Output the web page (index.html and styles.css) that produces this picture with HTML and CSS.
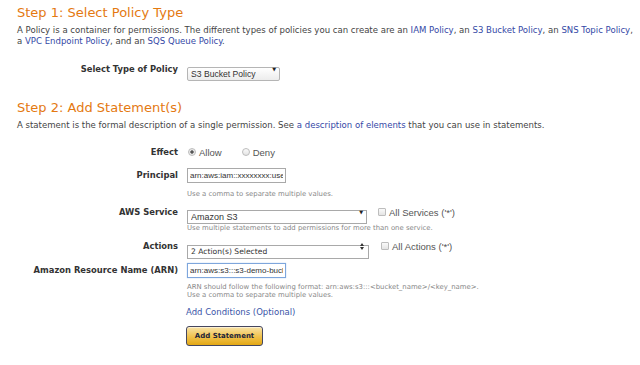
FILE: index.html
```html
<!DOCTYPE html>
<html lang="en">
<head>
    <meta charset="UTF-8">
    <meta name="viewport" content="width=device-width, initial-scale=1.0">
    <link rel="stylesheet" href="styles.css">
</head>
<body>
    <div class="wizard">
        <h2 class="step-title">Step 1: Select Policy Type</h2>
        <p class="step-intro">A Policy is a container for permissions. The different types of policies you can create are an <a href="#">IAM Policy</a>, an <a href="#">S3 Bucket Policy</a>, an <a href="#">SNS Topic Policy</a>,<br>a <a href="#">VPC Endpoint Policy</a>, and an <a href="#">SQS Queue Policy</a>.</p>

        <div class="field field-type">
            <label class="field-label">Select Type of Policy</label>
            <div class="field-control">
                <div class="dropdown dropdown-type">
                    <select><option>S3 Bucket Policy</option></select>
                    <span class="dropdown-arrow">&#9660;</span>
                </div>
            </div>
        </div>

        <h2 class="step-title step-two">Step 2: Add Statement(s)</h2>
        <p class="step-intro">A statement is the formal description of a single permission. See <a href="#">a description of elements</a> that you can use in statements.</p>

        <div class="field field-effect">
            <label class="field-label">Effect</label>
            <div class="field-control radios">
                <label class="choice"><input type="radio" name="effect" checked> Allow</label>
                <label class="choice choice-deny"><input type="radio" name="effect"> Deny</label>
            </div>
        </div>

        <div class="field field-principal">
            <label class="field-label">Principal</label>
            <div class="field-control">
                <input class="text-input" type="text" value="arn:aws:iam::xxxxxxxx:user/demo">
                <p class="hint">Use a comma to separate multiple values.</p>
            </div>
        </div>

        <div class="field field-service">
            <label class="field-label">AWS Service</label>
            <div class="field-control">
                <div class="inline">
                    <div class="dropdown dropdown-service">
                        <select><option>Amazon S3</option></select>
                        <span class="dropdown-arrow">&#9660;</span>
                    </div>
                    <label class="choice check"><input type="checkbox"> All Services ('*')</label>
                </div>
                <p class="hint">Use multiple statements to add permissions for more than one service.</p>
            </div>
        </div>

        <div class="field field-actions">
            <label class="field-label">Actions</label>
            <div class="field-control">
                <div class="inline">
                    <div class="dropdown dropdown-actions">
                        <select><option>2 Action(s) Selected</option></select>
                        <svg class="dropdown-updown" width="4" height="7" viewBox="0 0 4 7"><path d="M0 3 L2 0 L4 3 Z M0 4 L2 7 L4 4 Z" fill="#333"/></svg>
                    </div>
                    <label class="choice check check-actions"><input type="checkbox"> All Actions ('*')</label>
                </div>
            </div>
        </div>

        <div class="field field-arn">
            <label class="field-label">Amazon Resource Name (ARN)</label>
            <div class="field-control">
                <input class="text-input focused" type="text" value="arn:aws:s3:::s3-demo-bucket/*">
                <p class="hint">ARN should follow the following format: arn:aws:s3:::&lt;bucket_name&gt;/&lt;key_name&gt;.<br>Use a comma to separate multiple values.</p>
                <a class="conditions" href="#">Add Conditions (Optional)</a>
                <button class="add-btn">Add Statement</button>
            </div>
        </div>
    </div>
</body>
</html>
```

FILE: styles.css
```css
/* Global */
* {
    margin: 0;
    padding: 0;
    box-sizing: border-box;
}
body {
    font-family: "DejaVu Sans", Verdana, sans-serif;
    color: #444;
    background-color: #fff;
}
a {
    color: #3448a6;
    text-decoration: none;
}

/* Steps */
.wizard {
    padding: 5px 0 0 17px;
}
.step-title {
    font-size: 13px;
    line-height: 16px;
    font-weight: normal;
    color: #e47911;
}
.step-two {
    margin-top: 24px;
}
.step-intro {
    font-size: 8.55px;
    line-height: 11px;
    margin-top: 4px;
    white-space: nowrap;
}

/* Form rows */
.field {
    display: grid;
    grid-template-columns: 161px 1fr;
    column-gap: 9px;
}
.field-label {
    text-align: right;
    font-weight: bold;
    font-size: 8.4px;
    line-height: 15px;
    color: #333;
}
.field-type {
    margin-top: 15px;
}
.field-type .field-label {
    line-height: 14px;
}
.field-effect {
    margin-top: 15px;
}
.field-effect .field-label {
    line-height: 12px;
}
.field-principal {
    margin-top: 10px;
}
.field-service {
    margin-top: 7px;
}
.field-service .field-label,
.field-actions .field-label {
    line-height: 14px;
}
.field-actions {
    margin-top: 7px;
}
.field-arn {
    margin-top: 10px;
}

/* Radios and checkboxes */
.radios {
    display: flex;
    align-items: center;
    height: 12px;
}
.choice {
    display: flex;
    align-items: center;
    gap: 3px;
    font-family: "Liberation Sans", Arial, sans-serif;
    font-size: 9.5px;
    color: #555;
}
.choice input {
    appearance: none;
    width: 8px;
    height: 8px;
    border: 1px solid #bdbdbd;
    background: linear-gradient(#fafafa, #e4e4e4);
}
.choice input[type="radio"] {
    border-radius: 50%;
    margin-left: 1px;
}
.choice input[type="radio"]:checked {
    background: radial-gradient(circle, #555 0, #555 1.4px, #e9e9e9 1.9px);
}
.choice input[type="checkbox"] {
    border-radius: 1px;
}
.choice-deny {
    margin-left: 19px;
}
.check {
    margin-left: 11px;
}
.check-actions {
    margin-left: 12px;
}

/* Text inputs */
.text-input {
    display: block;
    width: 99px;
    height: 15px;
    border: 1px solid #a9a9a9;
    padding: 0 2px;
    font-family: "Liberation Sans", Arial, sans-serif;
    font-size: 8px;
    color: #333;
    outline: none;
}
.text-input.focused {
    border-color: #7ea6dc;
    box-shadow: 0 0 1px #9fc0ea;
}
.hint {
    font-size: 6.9px;
    line-height: 8px;
    color: #888;
    margin-top: 7px;
    white-space: nowrap;
}
.field-service .hint {
    margin-top: 5px;
}
.field-arn .hint {
    margin-top: 5px;
}

/* Dropdowns */
.inline {
    display: flex;
    align-items: center;
}
.dropdown {
    position: relative;
    height: 14px;
}
.dropdown select {
    appearance: none;
    width: 100%;
    height: 100%;
    border: 1px solid #a9a9a9;
    background: #fff;
    padding: 0 3px;
    font-family: "Liberation Sans", Arial, sans-serif;
    font-size: 9px;
    color: #333;
}
.dropdown-type {
    width: 93px;
}
.dropdown-type select {
    border-radius: 2px;
    border-color: #b5b5b5;
    background: linear-gradient(#fff, #ececec);
    font-size: 8.6px;
}
.dropdown-service {
    width: 180px;
}
.dropdown-actions {
    width: 182px;
}
.dropdown-actions select {
    font-family: "DejaVu Sans", Verdana, sans-serif;
    font-size: 7.6px;
}
.dropdown-arrow {
    position: absolute;
    right: 4px;
    top: 4px;
    font-size: 5px;
    color: #222;
}
.dropdown-updown {
    position: absolute;
    right: 5px;
    top: 4px;
}

/* Bottom actions */
.conditions {
    display: block;
    margin-top: 7px;
    margin-left: -1px;
    font-size: 8.5px;
    line-height: 12px;
    color: #3b55a8;
}
.add-btn {
    display: block;
    margin-top: 8px;
    margin-left: -1px;
    width: 77px;
    height: 20px;
    border: 1px solid #45475f;
    border-radius: 3px;
    background: linear-gradient(#f8e3a8, #f0c14b 55%, #e3a814);
    font-family: "DejaVu Sans", Verdana, sans-serif;
    font-weight: bold;
    font-size: 7px;
    color: #1b1f3a;
    box-shadow: inset 0 1px 0 rgba(255, 255, 255, 0.5);
}
```
